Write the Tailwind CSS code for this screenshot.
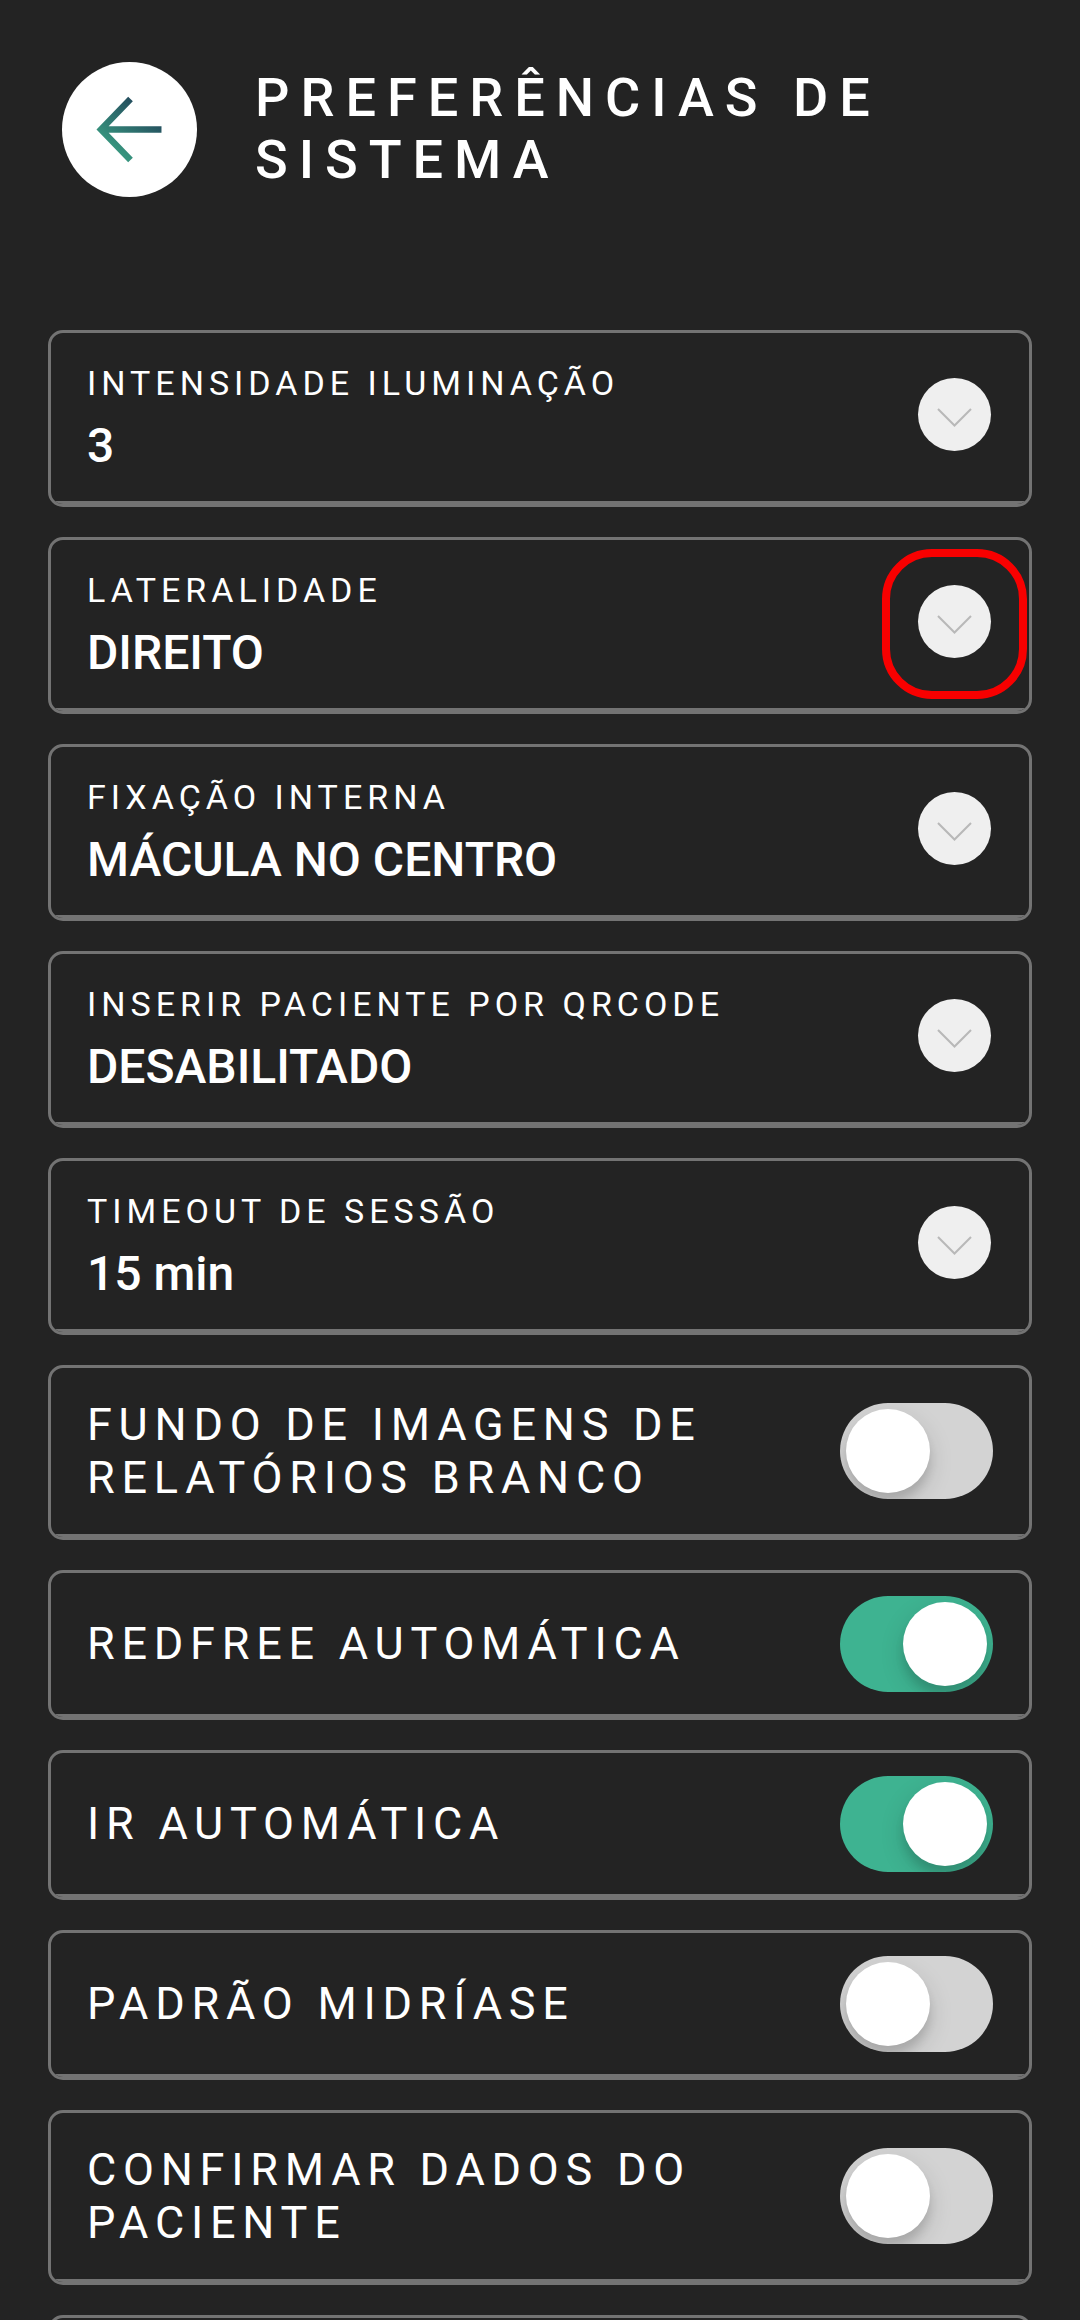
<!DOCTYPE html>
<html lang="pt-BR">
<head>
  <meta charset="UTF-8">
  <meta name="viewport" content="width=device-width, initial-scale=1.0">
  <title>Preferências de Sistema</title>
  <script src="https://cdn.jsdelivr.net/npm/@tailwindcss/browser@4"></script>
</head>
<body class="bg-[#232323] font-['Roboto',sans-serif] text-white overflow-x-hidden">
  <!-- Header -->
  <header class="flex items-start px-[62px] pt-[62px] pb-[133px] gap-[58px]">
    <button type="button" aria-label="Voltar" class="flex size-[135px] shrink-0 items-center justify-center rounded-full bg-white">
      <svg class="size-[135px]" viewBox="0 0 135 135" fill="none" stroke="url(#arrow)" stroke-width="6.500">
        <defs>
          <linearGradient id="arrow" gradientUnits="userSpaceOnUse" x1="48" y1="82" x2="80" y2="42">
            <stop offset="0" stop-color="#37947e"/>
            <stop offset="1" stop-color="#234a5c"/>
          </linearGradient>
        </defs>
        <path d="M68.500 37L39 67.500L68.500 98M40 67.400L99.500 67.600"/>
      </svg>
    </button>
    <h1 class="pt-[5px] text-[54px] leading-[62px] font-medium tracking-[11px]">PREFERÊNCIAS DE SISTEMA</h1>
  </header>

  <main class="flex flex-col gap-[30px] px-12">
    <!-- Seletores -->
    <div class="relative flex h-[177px] flex-col overflow-hidden rounded-[15px] border-3 border-[#737373] px-9 pt-[30px] after:absolute after:inset-x-0 after:bottom-0 after:h-[3px] after:bg-[#737373]">
      <label for="intensidade" class="text-[34px] leading-[40px] tracking-[5px]">INTENSIDADE ILUMINAÇÃO</label>
      <select id="intensidade" class="mt-[15px] h-[56px] w-full appearance-none bg-transparent text-[48px] leading-[56px] font-medium">
        <option>3</option>
      </select>
      <span class="pointer-events-none absolute top-[45px] right-[38px] size-[73px] rounded-full bg-[#efefef]">
        <svg viewBox="0 0 73 73" fill="none" stroke="#b8b8b8" stroke-width="2"><path d="M20 31L36.500 47.500L53 31"/></svg>
      </span>
    </div>

    <div class="relative flex h-[177px] flex-col overflow-hidden rounded-[15px] border-3 border-[#737373] px-9 pt-[30px] after:absolute after:inset-x-0 after:bottom-0 after:h-[3px] after:bg-[#737373]">
      <label for="lateralidade" class="text-[34px] leading-[40px] tracking-[5px]">LATERALIDADE</label>
      <select id="lateralidade" class="mt-[15px] h-[56px] w-full appearance-none bg-transparent text-[48px] leading-[56px] font-medium">
        <option>DIREITO</option>
      </select>
      <span class="pointer-events-none absolute top-[45px] right-[38px] size-[73px] rounded-full bg-[#efefef]">
        <svg viewBox="0 0 73 73" fill="none" stroke="#b8b8b8" stroke-width="2"><path d="M20 31L36.500 47.500L53 31"/></svg>
      </span>
      <!-- destaque -->
      <span class="pointer-events-none absolute top-[9px] right-[2px] h-[150px] w-[145px] rounded-[50px] border-8 border-[#f80000]"></span>
    </div>

    <div class="relative flex h-[177px] flex-col overflow-hidden rounded-[15px] border-3 border-[#737373] px-9 pt-[30px] after:absolute after:inset-x-0 after:bottom-0 after:h-[3px] after:bg-[#737373]">
      <label for="fixacao" class="text-[34px] leading-[40px] tracking-[5px]">FIXAÇÃO INTERNA</label>
      <select id="fixacao" class="mt-[15px] h-[56px] w-full appearance-none bg-transparent text-[48px] leading-[56px] font-medium">
        <option>MÁCULA NO CENTRO</option>
      </select>
      <span class="pointer-events-none absolute top-[45px] right-[38px] size-[73px] rounded-full bg-[#efefef]">
        <svg viewBox="0 0 73 73" fill="none" stroke="#b8b8b8" stroke-width="2"><path d="M20 31L36.500 47.500L53 31"/></svg>
      </span>
    </div>

    <div class="relative flex h-[177px] flex-col overflow-hidden rounded-[15px] border-3 border-[#737373] px-9 pt-[30px] after:absolute after:inset-x-0 after:bottom-0 after:h-[3px] after:bg-[#737373]">
      <label for="qrcode" class="text-[34px] leading-[40px] tracking-[5px]">INSERIR PACIENTE POR QRCODE</label>
      <select id="qrcode" class="mt-[15px] h-[56px] w-full appearance-none bg-transparent text-[48px] leading-[56px] font-medium">
        <option>DESABILITADO</option>
      </select>
      <span class="pointer-events-none absolute top-[45px] right-[38px] size-[73px] rounded-full bg-[#efefef]">
        <svg viewBox="0 0 73 73" fill="none" stroke="#b8b8b8" stroke-width="2"><path d="M20 31L36.500 47.500L53 31"/></svg>
      </span>
    </div>

    <div class="relative flex h-[177px] flex-col overflow-hidden rounded-[15px] border-3 border-[#737373] px-9 pt-[30px] after:absolute after:inset-x-0 after:bottom-0 after:h-[3px] after:bg-[#737373]">
      <label for="timeout" class="text-[34px] leading-[40px] tracking-[5px]">TIMEOUT DE SESSÃO</label>
      <select id="timeout" class="mt-[15px] h-[56px] w-full appearance-none bg-transparent text-[48px] leading-[56px] font-medium">
        <option>15 min</option>
      </select>
      <span class="pointer-events-none absolute top-[45px] right-[38px] size-[73px] rounded-full bg-[#efefef]">
        <svg viewBox="0 0 73 73" fill="none" stroke="#b8b8b8" stroke-width="2"><path d="M20 31L36.500 47.500L53 31"/></svg>
      </span>
    </div>

    <!-- Interruptores -->
    <div class="relative flex min-h-[150px] items-center justify-between gap-10 overflow-hidden rounded-[15px] border-3 border-[#737373] px-9 pt-[30px] pb-[33px] after:absolute after:inset-x-0 after:bottom-0 after:h-[3px] after:bg-[#737373]">
      <label for="fundo" class="text-[45px] leading-[53px] tracking-[0.15em]">FUNDO DE IMAGENS DE RELATÓRIOS BRANCO</label>
      <input id="fundo" type="checkbox" role="switch" class="h-24 w-[153px] shrink-0 appearance-none overflow-hidden rounded-full bg-[#d3d3d3] p-[6px] before:block before:size-[84px] before:rounded-full before:bg-white before:shadow-[0_9px_24px_rgba(0,0,0,0.15),0_9px_9px_rgba(0,0,0,0.1)] checked:bg-[#3eb391] checked:before:ml-[57px]">
    </div>

    <div class="relative flex h-[150px] items-center justify-between gap-10 overflow-hidden rounded-[15px] border-3 border-[#737373] px-9 pb-[3px] after:absolute after:inset-x-0 after:bottom-0 after:h-[3px] after:bg-[#737373]">
      <label for="redfree" class="text-[45px] leading-[53px] tracking-[0.15em]">REDFREE AUTOMÁTICA</label>
      <input id="redfree" type="checkbox" role="switch" checked class="h-24 w-[153px] shrink-0 appearance-none overflow-hidden rounded-full bg-[#d3d3d3] p-[6px] before:block before:size-[84px] before:rounded-full before:bg-white before:shadow-[0_9px_24px_rgba(0,0,0,0.15),0_9px_9px_rgba(0,0,0,0.1)] checked:bg-[#3eb391] checked:before:ml-[57px]">
    </div>

    <div class="relative flex h-[150px] items-center justify-between gap-10 overflow-hidden rounded-[15px] border-3 border-[#737373] px-9 pb-[3px] after:absolute after:inset-x-0 after:bottom-0 after:h-[3px] after:bg-[#737373]">
      <label for="ir" class="text-[45px] leading-[53px] tracking-[0.15em]">IR AUTOMÁTICA</label>
      <input id="ir" type="checkbox" role="switch" checked class="h-24 w-[153px] shrink-0 appearance-none overflow-hidden rounded-full bg-[#d3d3d3] p-[6px] before:block before:size-[84px] before:rounded-full before:bg-white before:shadow-[0_9px_24px_rgba(0,0,0,0.15),0_9px_9px_rgba(0,0,0,0.1)] checked:bg-[#3eb391] checked:before:ml-[57px]">
    </div>

    <div class="relative flex h-[150px] items-center justify-between gap-10 overflow-hidden rounded-[15px] border-3 border-[#737373] px-9 pb-[3px] after:absolute after:inset-x-0 after:bottom-0 after:h-[3px] after:bg-[#737373]">
      <label for="midriase" class="text-[45px] leading-[53px] tracking-[0.15em]">PADRÃO MIDRÍASE</label>
      <input id="midriase" type="checkbox" role="switch" class="h-24 w-[153px] shrink-0 appearance-none overflow-hidden rounded-full bg-[#d3d3d3] p-[6px] before:block before:size-[84px] before:rounded-full before:bg-white before:shadow-[0_9px_24px_rgba(0,0,0,0.15),0_9px_9px_rgba(0,0,0,0.1)] checked:bg-[#3eb391] checked:before:ml-[57px]">
    </div>

    <div class="relative flex min-h-[150px] items-center justify-between gap-10 overflow-hidden rounded-[15px] border-3 border-[#737373] px-9 pt-[30px] pb-[33px] after:absolute after:inset-x-0 after:bottom-0 after:h-[3px] after:bg-[#737373]">
      <label for="confirmar" class="text-[45px] leading-[53px] tracking-[0.15em]">CONFIRMAR DADOS DO PACIENTE</label>
      <input id="confirmar" type="checkbox" role="switch" class="h-24 w-[153px] shrink-0 appearance-none overflow-hidden rounded-full bg-[#d3d3d3] p-[6px] before:block before:size-[84px] before:rounded-full before:bg-white before:shadow-[0_9px_24px_rgba(0,0,0,0.15),0_9px_9px_rgba(0,0,0,0.1)] checked:bg-[#3eb391] checked:before:ml-[57px]">
    </div>

    <div class="h-[150px] rounded-[15px] border-3 border-[#737373]"></div>
  </main>
</body>
</html>
